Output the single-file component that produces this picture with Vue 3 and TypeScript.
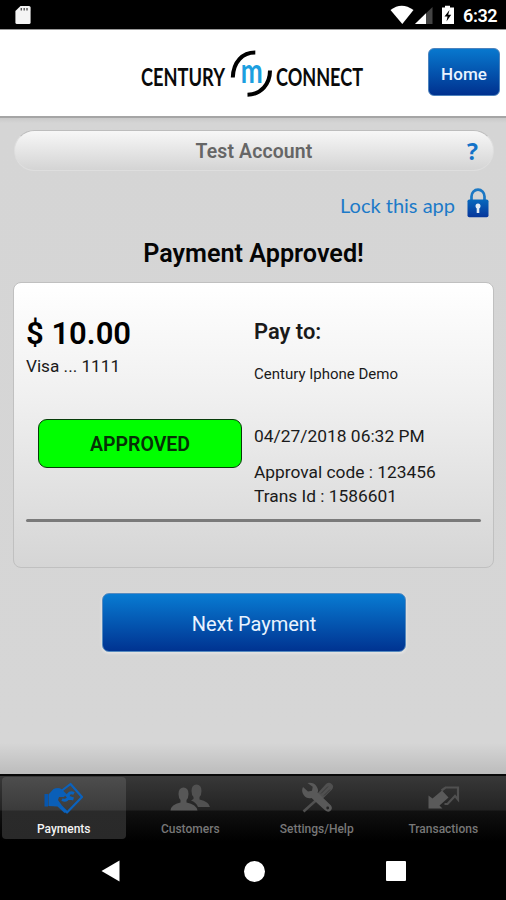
<script setup lang="ts">
import { ref } from 'vue'

type TabId = 'payments' | 'customers' | 'settings' | 'transactions'

const tabs: { id: TabId; label: string }[] = [
  { id: 'payments', label: 'Payments' },
  { id: 'customers', label: 'Customers' },
  { id: 'settings', label: 'Settings/Help' },
  { id: 'transactions', label: 'Transactions' },
]
const active = ref<TabId>('payments')
</script>

<template>
  <div class="screen">
    <div class="status">
      <svg class="sd" width="16" height="20" viewBox="0 0 16 20">
        <path d="M5.500 1H14a1.600 1.600 0 0 1 1.600 1.600v14.800A1.600 1.600 0 0 1 14 19H2A1.600 1.600 0 0 1 .4 17.400V6z" fill="#f4f4f4" />
        <path d="M6.300 3v2.500M9.200 3v2.500M12 3v2.500" stroke="#555" stroke-width="1.400" />
      </svg>
      <svg class="signals" width="66" height="22" viewBox="390 4 66 22">
        <path d="M390.500 10q11-8.500 23 0L402.300 24z" fill="#fff" />
        <path d="M432.500 7v17H415z" fill="#444" />
        <path d="M426 13.200V24H415z" fill="#fff" />
        <path d="M442 7.500h3V5.800h5v1.700h4V24h-12z" fill="#fff" />
        <path d="M449.500 10l-5 6.500h3l-1 5 4.700-6.700h-3z" fill="#000" />
      </svg>
      <span class="clock">6:32</span>
    </div>

    <header class="header">
      <svg class="logo" width="226" height="52" viewBox="0 0 226 52">
        <g transform="translate(2 38) scale(.75 1)">
          <text class="word" textLength="112" lengthAdjust="spacingAndGlyphs">CENTURY</text>
        </g>
        <g transform="translate(137 38) scale(.75 1)">
          <text class="word" textLength="116" lengthAdjust="spacingAndGlyphs">CONNECT</text>
        </g>
        <g transform="translate(101.800 34.800) scale(.75 1)">
          <text class="mark" textLength="29.300" lengthAdjust="spacingAndGlyphs">m</text>
        </g>
        <path d="M93.800 29.500C94.300 14 103.500 4.500 116.300 4.600M131 22.500C131 36 122 46.500 108.500 46.800" fill="none" stroke="#000" stroke-width="4" />
      </svg>
      <button class="home">Home</button>
    </header>

    <main class="content">
      <div class="account">
        <span>Test Account</span>
        <b class="help">?</b>
      </div>
      <div class="lock">
        <span>Lock this app</span>
        <svg width="22" height="30" viewBox="0 0 22 30">
          <defs>
            <linearGradient id="lockFill" x1="0" y1="0" x2="0" y2="1">
              <stop offset="0" stop-color="#0868bd" />
              <stop offset="1" stop-color="#06359a" />
            </linearGradient>
          </defs>
          <path d="M4.500 13V8.500a6.500 6.800 0 0 1 13 0V13" fill="none" stroke="#1c78c4" stroke-width="2.700" />
          <rect x=".5" y="11.500" width="21" height="17.800" rx="1.800" fill="url(#lockFill)" />
          <circle cx="11" cy="18" r="2.500" fill="#e4ecf5" />
          <path d="M11 18v7" stroke="#e4ecf5" stroke-width="2.600" />
        </svg>
      </div>
      <h1 class="title">Payment Approved!</h1>

      <section class="card">
        <div class="details">
          <div class="left">
            <div class="amount">$ 10.00</div>
            <div class="visa">Visa ... 1111</div>
            <div class="approved">APPROVED</div>
          </div>
          <div class="right">
            <div class="payto">Pay to:</div>
            <div class="merchant">Century Iphone Demo</div>
            <div class="date">04/27/2018 06:32 PM</div>
            <div class="code">Approval code : 123456</div>
            <div class="trans">Trans Id : 1586601</div>
          </div>
        </div>
        <div class="rule"></div>
      </section>

      <button class="next">Next Payment</button>
    </main>

    <nav class="tabs">
      <div v-for="tab in tabs" :key="tab.id" class="tab" :class="{ on: tab.id === active }" @click="active = tab.id">
        <svg v-if="tab.id === 'payments'" class="icon" width="44" height="32" viewBox="42 782 44 32">
          <path d="M44.500 794h3.500v12.500h-3.500z" fill="#0756ae" />
          <path d="M48.500 794.500l5-5.500q5-2 8.500.5l4.500 4.500-2.500 3h-5l-1 3 4 5.500 5.500 5.500-3 2-7-6.500-9-.5z" fill="#0a5fb8" />
          <path d="M62 790.500l8.500-6.500L82 797l-15 15.500-6-5" fill="none" stroke="#0b62bd" stroke-width="2.200" stroke-linejoin="round" />
          <path d="M74 793.500c-3.500-2-6 .2-5.700 2.700s-2 5.300-6.300 3.300M66 794.500l3 3 4.500 1.500" fill="none" stroke="#0862be" stroke-width="3" />
        </svg>
        <svg v-else-if="tab.id === 'customers'" class="icon" width="44" height="32" viewBox="169 782 44 32">
          <path d="M192.500 791q0-6.500 5-6.500t5 6.500q0 4-2 6v2.500q9.500 2 10.500 7.500h-12q-2-5-7-6.500l2.500-1.500V797q-2-2-2-6z" fill="#515151" />
          <path d="M179.500 794q0-6.500 5-6.500t5 6.500q0 4-2 6v2.500q10 2 11 8h-27q.5-6 10-8V800q-2-2-2-6z" fill="#575757" />
        </svg>
        <svg v-else-if="tab.id === 'settings'" class="icon" width="44" height="32" viewBox="295 782 44 32">
          <path d="M303.500 811.500l14-12.500" stroke="#505050" stroke-width="2.600" />
          <path d="M317 794l9-10q3-2.500 5.700 0t.3 5.500l-9.500 9.500z" fill="#505050" />
          <path d="M321 793.500l7-7M324 795.500l6-6" stroke="#3a3a3a" stroke-width="1" />
          <path d="M307.500 783q6-1 8.800 3t1.200 6.500L331 805.500q2 3-.5 5.200t-5.500-.4L311.500 798q-5 1-7.800-3t-.7-8l5 4.500 4-.7.700-4z" fill="#595959" />
          <circle cx="327.700" cy="808" r="1.400" fill="#262626" />
        </svg>
        <svg v-else class="icon" width="44" height="32" viewBox="421 782 44 32">
          <path d="M441.500 790.500l4-3h12.500v12l-3-3.500-7.500 8h-3" fill="none" stroke="#505050" stroke-width="2.200" />
          <path d="M428.500 795.500l4 3 9.500-8 6.500 7-9 8 3 3h-14z" fill="#5a5a5a" />
        </svg>
        <span>{{ tab.label }}</span>
      </div>
    </nav>

    <div class="system">
      <svg width="20" height="22" viewBox="0 0 20 22"><path d="M18.500 .5v21L.5 11z" fill="#fff" /></svg>
      <i class="circle"></i>
      <i class="square"></i>
    </div>
  </div>
</template>

<style>
body { margin: 0; background: #000; }
</style>

<style scoped>
.screen { width: 506px; height: 900px; display: flex; flex-direction: column; overflow: hidden; background: #000; font-family: Roboto, "Liberation Sans", sans-serif; color: #1a1a1a; }
.screen * { box-sizing: border-box; }
svg { display: block; flex: none; }
button { font-family: inherit; padding: 0; color: #e9f3ff; }
.status { height: 29px; flex: none; display: flex; align-items: center; padding: 0 9px 0 15px; }
.sd { margin-top: 1px; }
.signals { margin: 1px 7px 0 auto; }
.clock { width: 34px; font-size: 18px; font-weight: 600; line-height: 20px; margin-top: 3px; color: #fff; white-space: nowrap; letter-spacing: -.4px; }
.header { height: 89px; flex: none; background: #fff; border-top: 1px solid #999; border-bottom: 2px solid #a5a5a5; display: flex; align-items: flex-start; justify-content: space-between; padding: 18px 6px 0 139px; }
.word { font: 700 25.500px Lato, "Open Sans", sans-serif; fill: #0a0a0a; }
.mark { font: 700 34px Lato, "Open Sans", sans-serif; fill: #1c9fe0; }
.home { width: 72px; height: 48px; border: 1px solid #4d83bd; border-radius: 6px; background: linear-gradient(#0878ce, #00318f); font-size: 17px; font-weight: 500; padding-top: 3px; letter-spacing: .1px; }
.content { height: 656px; flex: none; background: linear-gradient(#c9c9c9 0, #d5d5d5 5px, #d6d6d6 625px, #bcbcbc 100%); display: flex; flex-direction: column; padding: 12px 12px 0 13px; }
.account { height: 41px; flex: none; margin: 0 0 0 1px; display: grid; grid-template-columns: 1fr auto 1fr; align-items: center; border-radius: 21px; background: linear-gradient(#f7f7f7, #d4d4d4); border: 1px solid #dedede; border-top-color: #bdbdbd; font-size: 19.400px; font-weight: 600; color: #666; }
.account span { grid-column: 2; letter-spacing: .15px; padding-top: 1px; }
.help { justify-self: end; margin-right: 15px; font: 700 23px "Open Sans", sans-serif; color: #1473c8; }
.lock { height: 30px; margin: 17px 5px 0 0; display: flex; justify-content: flex-end; align-items: center; gap: 12px; color: #1c7ac8; font: 20px Lato, "Open Sans", sans-serif; }
.lock span { margin-top: 4px; }
.title { margin: 21px 0 0; height: 30px; line-height: 30px; font-size: 25.200px; font-weight: 600; text-align: center; color: #050505; }
.card { height: 286px; flex: none; margin-top: 13px; padding: 0 12px; border: 1px solid #c0c0c0; border-radius: 8px; background: linear-gradient(#fff, #f0f0f0 40%, #d5d5d5); }
.details { display: flex; height: 236px; white-space: nowrap; }
.left { width: 228px; }
.amount { margin-top: 32px; height: 38px; line-height: 38px; font-size: 31px; font-weight: 600; color: #000; }
.visa { margin-top: 3px; height: 20px; line-height: 20px; font-size: 17.200px; }
.approved { margin: 43px 0 0 12px; width: 204px; height: 49px; line-height: 49px; text-align: center; border: 1.500px solid #063b08; border-radius: 9px; background: #0f0; font-size: 19.500px; font-weight: 600; color: #063006; }
.payto { margin-top: 36px; height: 26px; line-height: 26px; font-size: 21.900px; font-weight: 600; }
.merchant { margin-top: 19px; height: 20px; line-height: 20px; font-size: 15px; }
.date { margin-top: 41px; height: 22px; line-height: 22px; font-size: 17.400px; }
.code { margin-top: 13px; height: 24px; line-height: 24px; font-size: 17.350px; }
.trans { height: 24px; line-height: 24px; font-size: 17.350px; }
.rule { height: 3px; background: #7a7a7a; border-radius: 2px; }
.next { width: 304px; height: 59px; margin: 25px 0 0 89px; padding-top: 2px; border: 1px solid #568abf; border-radius: 7px; background: linear-gradient(#087bd2, #003391); box-shadow: 0 1px 2px 1px #e2e2e2; font-size: 20px; }
.tabs { height: 72px; flex: none; display: grid; grid-template-columns: repeat(4, 126.500px); border-top: 2px solid #080808; background: linear-gradient(#383838, #232323 34px, #101010 35px, #000 66px); padding-top: 1px; }
.tab { display: flex; flex-direction: column; align-items: center; margin: 0 1px 0 2px; height: 62px; border-radius: 4px; padding-top: 5px; font-size: 12px; color: #777; font-weight: 500; }
.tab span { margin-top: 8px; line-height: 14px; }
.on { background: linear-gradient(#4d4d4d, #3b3b3b 33px, #2a2a2a 34px, #292929); color: #f4f4f4; }
.system { height: 54px; flex: none; display: grid; grid-template-columns: 20px 20px 20px; column-gap: 122.500px; align-items: center; padding: 0 0 4px 101px; }
.circle { width: 21px; height: 21px; border-radius: 50%; background: #fff; }
.square { width: 20px; height: 20px; border-radius: 1px; background: #fff; }
</style>
